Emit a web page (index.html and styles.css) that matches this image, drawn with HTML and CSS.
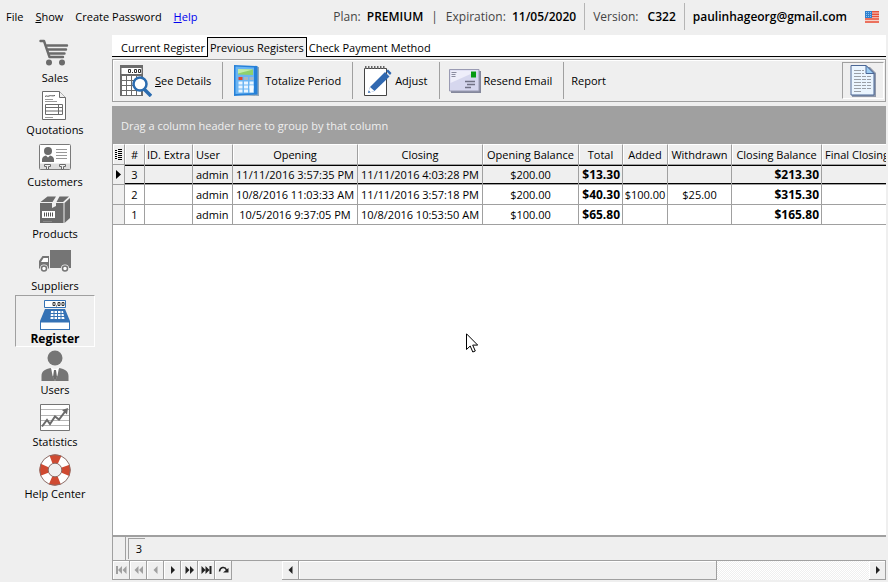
FILE: index.html
```html
<!DOCTYPE html>
<html lang="en">
<head>
  <meta charset="UTF-8" />
  <meta name="viewport" content="width=device-width, initial-scale=1.0"/>
  <title>Register</title>
  <link rel="stylesheet" href="styles.css">
</head>
<body>
  <header class="topbar">
    <nav class="menu">
      <button>File</button>
      <button><u>S</u>how</button>
      <button>Create Password</button>
      <a href="#help"><u>H</u>elp</a>
    </nav>
    <div class="account">
      <span>Plan: <b>PREMIUM</b></span>
      <span class="pipe">|</span>
      <span>Expiration: <b>11/05/2020</b></span>
      <span class="divided version">Version: <b>C322</b></span>
      <span class="divided email">paulinhageorg@gmail.com</span>
      <svg class="flag" viewBox="0 0 14 12" aria-label="English">
        <rect width="14" height="12" fill="#f6d5cc"/>
        <path d="M0 .8h14M0 3.2h14M0 5.6h14M0 8h14M0 10.9h14" stroke="#e8503a" stroke-width="1.5"/>
        <rect width="7" height="7" fill="#2f80cf"/>
        <path d="M1 1.5h5M1 3.5h5M1 5.5h5" stroke="#8fc4ee" stroke-dasharray="1 1"/>
      </svg>
    </div>
  </header>

  <div class="layout">
    <nav class="sidebar">
      <button class="side-item">
        <svg viewBox="0 0 32 32" fill="none" stroke="#6b6b6b" stroke-linecap="round" stroke-linejoin="round">
          <path d="M1.500 3h3.500l5.500 16H24" stroke-width="2.4"/>
          <path d="M8 7.500h20M9 11.500h18M10.500 15.500h15" stroke-width="2.4"/>
          <circle cx="10" cy="24.500" r="3" fill="#6b6b6b" stroke="none"/>
          <circle cx="23" cy="24.500" r="3" fill="#6b6b6b" stroke="none"/>
        </svg>
        <span>Sales</span>
      </button>
      <button class="side-item">
        <svg viewBox="0 0 32 32">
          <path d="M3.500 1.500h17l6 6v22h-23z" fill="#fff" stroke="#6b6b6b"/>
          <path d="M20.500 1.500v6h6" fill="#efefef" stroke="#6b6b6b"/>
          <path d="M6 6.500c2-1.500 2 .5 4-.5s3 .5 6-.5" fill="none" stroke="#555"/>
          <path d="M6 9.500h8M6 11.500h12M6 27.500h8" stroke="#999"/>
          <path d="M6.500 14.500h17v10h-17zM6.500 17.500h17M6.500 21h17M19.500 14.500v10" fill="none" stroke="#6b6b6b"/>
        </svg>
        <span>Quotations</span>
      </button>
      <button class="side-item">
        <svg viewBox="0 0 32 32">
          <rect x=".5" y="2.500" width="31" height="25" rx="1" fill="#fff" stroke="#7a7a7a"/>
          <path d="M1 21.500h30v5.500H1z" fill="#dedede"/>
          <circle cx="9" cy="9" r="4" fill="#6b6b6b"/>
          <path d="M3 20v-2.500c0-2.500 2-3.500 4-4l2 2 2-2c2 .5 4 1.500 4 4V20z" fill="#6b6b6b"/>
          <path d="M17 7.500h11M17 10.500h11M17 13.500h11M17 16.500h11" stroke="#999"/>
          <path d="M5.500 22.500h6v2h-2v3h-2v-3h-2zM20.500 22.500h6v2h-2v3h-2v-3h-2z" fill="#efefef" stroke="#6b6b6b"/>
        </svg>
        <span>Customers</span>
      </button>
      <button class="side-item">
        <svg viewBox="0 0 32 32" fill="#6b6b6b">
          <path d="M1 9h12v5l4-2V9h7.500v20H1z"/>
          <path d="M1.500 8l7-5.500H17L13.500 8zM19 2.500h11L24 8h-6.500l3-5.500z"/>
          <path d="M25.500 9l5.500-5v20l-5.500 5z"/>
          <path d="M3 17h13v7H3z" fill="#fff"/>
          <path d="M5.500 18.500v4M7.500 18.500v4M9.500 18.500v4M11.500 18.500v4M13.500 18.500v4" stroke="#555"/>
          <path d="M4 27.500h9" stroke="#888"/>
        </svg>
        <span>Products</span>
      </button>
      <button class="side-item">
        <svg viewBox="0 -2 32 32" fill="#757575">
          <path d="M11 2h21v18H11z"/>
          <path d="M0 20.500V13l3.500-5H10v12.500z"/>
          <path d="M2 14l2.500-4H9v4z" fill="#fff"/>
          <circle cx="5" cy="20.500" r="4" fill="#efefef"/><circle cx="26" cy="20.500" r="4" fill="#efefef"/>
          <circle cx="5" cy="20.500" r="2.500" fill="#fff" stroke="#757575" stroke-width="1.500"/>
          <circle cx="26" cy="20.500" r="2.500" fill="#fff" stroke="#757575" stroke-width="1.500"/>
        </svg>
        <span>Suppliers</span>
      </button>
      <button class="side-item active">
        <svg viewBox="0 0 32 32">
          <path d="M5.500 1.500h21v7h-21z" fill="#fff" stroke="#3572b5"/>
          <path d="M14 3.500h2v3h-2zM17.500 6.500v1M19 3.500h2v3h-2zM23 3.500h2v3h-2z" fill="none" stroke="#333"/>
          <path d="M6 10h20l5 12v9H1v-9z" fill="#3572b5"/>
          <path d="M2 23.500h28v6.500H2z" fill="#fff"/>
          <path d="M12 12h12l1.500 8h-14z" fill="#fff"/>
          <path d="M11 14.500h15M11 17.500h15M15 12v8M18.500 12v8M22 12v8" stroke="#3572b5"/>
        </svg>
        <span>Register</span>
      </button>
      <button class="side-item">
        <svg viewBox="0 0 32 32">
          <circle cx="16" cy="8" r="7.500" fill="#757575"/>
          <path d="M2.500 31v-5c0-5 4-7 9-8l4.500 3 4.500-3c5 1 9 3 9 8v5z" fill="#757575"/>
          <path d="M12 17.500l4 2 4-2-1.500 8L16 31l-2.500-5.500z" fill="#fff"/>
          <path d="M15 20h2l1 7-2 4-2-4z" fill="#6b6b6b"/>
        </svg>
        <span>Users</span>
      </button>
      <button class="side-item">
        <svg viewBox="0 0 32 32" fill="none">
          <path d="M1.500 2.500h29v26h-29z" fill="#fff" stroke="#757575"/>
          <path d="M2 7.500h28M2 13.500h28M2 18.500h28M2 23.500h28" stroke="#b5b5b5"/>
          <path d="M3 24.500l5-6.500 3 4 5-7.500 4 3L26.500 9" stroke="#6b6b6b" stroke-width="2"/>
          <path d="M23 8l6-2-1 6.500z" fill="#6b6b6b"/>
        </svg>
        <span>Statistics</span>
      </button>
      <button class="side-item">
        <svg viewBox="0 0 32 32" fill="none">
          <circle cx="16" cy="16" r="11" stroke="#fff" stroke-width="9"/>
          <circle cx="16" cy="16" r="11" stroke="#cf4a31" stroke-width="9" stroke-dasharray="8.640 8.640" stroke-dashoffset="4.320"/>
          <circle cx="16" cy="16" r="15.300" stroke="#8a6a64"/>
          <circle cx="16" cy="16" r="6.800" fill="#efefef" stroke="#8a6a64"/>
        </svg>
        <span>Help Center</span>
      </button>
    </nav>

    <main class="content">
      <div class="tabs" role="tablist">
        <button class="tab" role="tab">Current Register</button>
        <button class="tab selected" role="tab" aria-selected="true">Previous Registers</button>
        <button class="tab" role="tab">Check Payment Method</button>
      </div>

      <div class="toolbar">
        <button class="tool">
          <svg viewBox="0 0 32 32">
            <path d="M0 0h23v31H0z" fill="#6b6b6b"/>
            <path d="M1.500 3h20v6h-20z" fill="#fff"/>
            <path d="M8.500 4.500h2v3h-2zM12.500 7v1M14.500 4.500h2v3h-2zM18.500 4.500h2v3h-2z" fill="none" stroke="#333"/>
            <path d="M2 13h19M2 18h19M2 23h19M2 28h19" stroke="#fff" stroke-width="4" stroke-dasharray="4 1"/>
            <path d="M24 24l7 7" stroke="#2b6cb0" stroke-width="3.500"/>
            <circle cx="20" cy="19" r="6.500" fill="#fff" stroke="#2b6cb0" stroke-width="2.500"/>
          </svg>
          <span><u>S</u>ee Details</span>
        </button>
        <button class="tool">
          <svg viewBox="0 0 32 32">
            <path d="M5 1l24 1v29L5 30z" fill="#8fa5b8"/>
            <path d="M4 0l23.500 1v28.500L4 31z" fill="#2580d8"/>
            <path d="M5.500 1.500L24 2.500v25.500L5.500 29z" fill="#6bb5f3"/>
            <path d="M8 4l15 .5v5.500L8 9.500z" fill="#8fd16c"/>
            <path d="M8 4l15 .5-15 4z" fill="#c0ecab"/>
            <path d="M8.500 12h4v3h-4z" fill="#e2442e"/>
            <path d="M14 13.500h4M19.500 13.500h4" stroke="#a9b7c3" stroke-width="3"/>
            <path d="M8.500 18h15M8.500 22h15M8.500 26h9.500" stroke="#e9f5ff" stroke-width="3" stroke-dasharray="4 1.500"/>
            <path d="M19.500 20.500h4v7h-4z" fill="#f4faff"/>
          </svg>
          <span>Totalize Period</span>
        </button>
        <button class="tool">
          <svg viewBox="0 0 32 32">
            <path d="M4.500 3.500h22v27h-22z" fill="#fff" stroke="#444"/>
            <path d="M5 2.500h21" stroke="#666" stroke-width="3" stroke-dasharray="1.500 1.500"/>
            <path d="M8 28l2-6L25 7l4.500 4.500-15 14.500z" fill="#3068b0"/>
            <path d="M8 28l2-6 4.500 4z" fill="#fff"/>
            <path d="M8 28l.8-2.500 1.700 1.700z" fill="#3068b0"/>
            <path d="M26 6l2-1.500 3.500 3.500L30 10z" fill="#3068b0"/>
          </svg>
          <span>Adjust</span>
        </button>
        <button class="tool wide">
          <svg viewBox="0 0 32 32">
            <path d="M2 6h30v22H2z" fill="#85889c"/>
            <path d="M.5 4.500h29.500v21.500H.5z" fill="#d6d7ee" stroke="#9a9bb3"/>
            <path d="M1.500 5.500h28L1.500 18z" fill="#eeeefa"/>
            <path d="M22 6.500h5v6h-5z" fill="#069a10"/>
            <path d="M2.500 7.500h5M2.500 9.500h4M2.500 11.500h4" stroke="#8b8ca0"/>
            <path d="M16 16.500h10M18 19.500h8M16 22.500h6" stroke="#707184" stroke-width="1.500"/>
          </svg>
          <span>Resend Email</span>
        </button>
        <button class="tool">Report</button>
        <button class="tool-page" aria-label="Page">
          <svg viewBox="0 0 32 32">
            <path d="M5 2h18l6 6v24H5z" fill="#8f98aa"/>
            <path d="M4 .5h15l8 8v21.500H4z" fill="#eaf5ff" stroke="#4b6796"/>
            <path d="M19 .5v8h8z" fill="#9cccf2" stroke="#4b6796"/>
            <path d="M7 5.500h10M7 8.500h10M7 11.500h17M7 14.500h17M7 17.500h17M7 20.500h17M7 23.500h17M7 26.500h8" stroke="#9a9fa6" stroke-dasharray="7 1 4 1"/>
          </svg>
        </button>
      </div>

      <section class="grid">
        <div class="group-bar">Drag a column header here to group by that column</div>
        <div class="grid-body">
          <table class="registers">
            <colgroup>
              <col class="c-mark"><col class="c-num"><col class="c-extra"><col class="c-user">
              <col class="c-date"><col class="c-date"><col class="c-balance"><col class="c-total">
              <col class="c-added"><col class="c-withdrawn"><col class="c-closing"><col>
            </colgroup>
            <thead>
              <tr>
                <th aria-label="Columns">
                  <svg class="list" viewBox="0 0 8 11"><path d="M0 1.500h2M0 3.500h2M0 5.500h2M0 7.500h2M0 9.500h2M3 .5h4M3 2.500h4M3 4.500h4M3 6.500h4M3 8.500h4M3 10.500h4" stroke="#000"/></svg>
                </th>
                <th>#</th>
                <th>ID. Extra</th>
                <th class="left">User</th>
                <th>Opening</th>
                <th>Closing</th>
                <th>Opening Balance</th>
                <th>Total</th>
                <th>Added</th>
                <th>Withdrawn</th>
                <th>Closing Balance</th>
                <th class="left">Final Closing</th>
              </tr>
            </thead>
            <tbody>
              <tr class="current">
                <td class="mark"><svg class="arrow" viewBox="0 0 5 9"><path d="M0 0l5 4.500L0 9z"/></svg></td>
                <td>3</td><td></td><td class="left">admin</td>
                <td>11/11/2016 3:57:35 PM</td><td>11/11/2016 4:03:28 PM</td>
                <td>$200.00</td><td class="sum">$13.30</td><td></td><td></td><td class="sum">$213.30</td><td></td>
              </tr>
              <tr>
                <td class="mark"></td>
                <td>2</td><td></td><td class="left">admin</td>
                <td>10/8/2016 11:03:33 AM</td><td>11/11/2016 3:57:18 PM</td>
                <td>$200.00</td><td class="sum">$40.30</td><td>$100.00</td><td>$25.00</td><td class="sum">$315.30</td><td></td>
              </tr>
              <tr>
                <td class="mark"></td>
                <td>1</td><td></td><td class="left">admin</td>
                <td>10/5/2016 9:37:05 PM</td><td>10/8/2016 10:53:50 AM</td>
                <td>$100.00</td><td class="sum">$65.80</td><td></td><td></td><td class="sum">$165.80</td><td></td>
              </tr>
            </tbody>
          </table>
          <svg class="cursor" viewBox="0 0 12 20"><path d="M.5.8v15.700l3.700-3.500 2.600 6 2.500-1-2.600-5.900h5z" fill="#fff" stroke="#000"/></svg>
        </div>
        <div class="grid-footer"><span class="count">3</span></div>
        <div class="grid-nav">
          <button aria-label="First" disabled><svg viewBox="0 0 11 8"><path d="M0 0h2v8H0zM6 0v8L2 4zM10.500 0v8l-4-4z"/></svg></button>
          <button aria-label="Previous page" disabled><svg viewBox="0 0 11 8"><path d="M5.500 0v8l-4-4zM10 0v8L6 4z"/></svg></button>
          <button aria-label="Previous" disabled><svg viewBox="0 0 11 8"><path d="M7.500 0v8l-4-4z"/></svg></button>
          <button aria-label="Next"><svg viewBox="0 0 11 8"><path d="M4 0v8l4-4z"/></svg></button>
          <button aria-label="Next page"><svg viewBox="0 0 11 8"><path d="M1.500 0v8l4-4zM6 0v8l4-4z"/></svg></button>
          <button aria-label="Last"><svg viewBox="0 0 11 8"><path d="M.5 0v8l4-4zM4.500 0v8l4-4zM8.500 0h2v8h-2z"/></svg></button>
          <button aria-label="Refresh"><svg viewBox="0 0 11 8"><path d="M1.500 5.500C2 1 7 0 8.500 4" fill="none" stroke="#222" stroke-width="1.500"/><path d="M5 6.500h5.500V2z"/></svg></button>
          <div class="scrollbar">
            <button class="scroll-btn" aria-label="Scroll left"><svg viewBox="0 0 11 8"><path d="M7.500 0v8l-4-4z"/></svg></button>
            <div class="thumb"></div>
            <div class="track"></div>
            <button class="scroll-btn" aria-label="Scroll right"><svg viewBox="0 0 11 8"><path d="M4 0v8l4-4z"/></svg></button>
          </div>
        </div>
      </section>
    </main>
  </div>
</body>
</html>
```
FILE: styles.css
```css
* {
  box-sizing: border-box;
}

body {
  margin: 0;
  height: 100vh;
  display: flex;
  flex-direction: column;
  background: #efefef;
  color: #000;
  font-family: "Open Sans", "Noto Sans", sans-serif;
  font-size: 11px;
  line-height: 16px;
  overflow: hidden;
}

button {
  font: inherit;
  color: inherit;
  background: none;
  border: none;
  padding: 0;
  white-space: nowrap;
}

svg {
  display: block;
  flex: none;
}

/* Top bar */
.topbar {
  height: 35px;
  flex: none;
  display: flex;
  align-items: center;
  justify-content: space-between;
  padding: 0 9px 2px 6px;
}

.menu {
  display: flex;
  gap: 12px;
}

.menu a {
  color: #0000f0;
  text-decoration: none;
}

.account {
  display: flex;
  align-items: center;
  font-size: 12px;
  color: #444;
  white-space: nowrap;
}

.account b {
  font-weight: 600;
  color: #000;
  margin-left: 3px;
}

.pipe {
  margin: 0 8px;
}

.divided {
  border-left: 1px solid #b5b5b5;
  padding-left: 8px;
  margin-left: 8px;
  line-height: 27px;
}

.account .version b {
  margin-left: 6px;
}

.email {
  font-weight: 600;
  color: #000;
}

.flag {
  width: 14px;
  height: 12px;
  margin-left: 18px;
}

.layout {
  flex: 1;
  min-height: 0;
  display: flex;
}

/* Sidebar */
.sidebar {
  width: 112px;
  flex: none;
  display: flex;
  flex-direction: column;
  align-items: center;
  padding-right: 2px;
}

.side-item {
  width: 80px;
  height: 52px;
  display: flex;
  flex-direction: column;
  align-items: center;
  justify-content: center;
  border: 1px solid transparent;
  padding-top: 2px;
}

.side-item svg {
  width: 32px;
  height: 32px;
}

.side-item.active {
  border-color: #a0a0a0 #fff #fff #a0a0a0;
  font-size: 12px;
  font-weight: bold;
  padding-top: 4px;
}

/* Content */
.content {
  flex: 1;
  min-width: 0;
  display: flex;
  flex-direction: column;
  padding: 0 2px 2px 0;
}

.tabs {
  height: 22px;
  flex: none;
  display: flex;
  padding: 2px 0 0 7px;
  background: #fff;
  border-bottom: 1px solid #000;
}

.tab {
  padding: 2px 2px 0;
  height: 20px;
}

.tab.selected {
  background: #efefef;
  border: 1px solid #000;
  border-bottom: none;
  padding-top: 1px;
}

.toolbar {
  flex: none;
  height: 43px;
  margin: 2px 0 4px;
  display: flex;
  border: 1px solid #a0a0a0;
  box-shadow: inset 1px 1px #fff;
  padding: 2px 0;
}

.tool {
  display: flex;
  align-items: center;
  gap: 3px;
  padding: 0 11px 0 7px;
  border-right: 1px solid #a0a0a0;
}

.tool.wide {
  padding-left: 9px;
}

.tool svg,
.tool-page svg {
  width: 32px;
  height: 32px;
}

.tool:nth-child(5) {
  border-right: none;
}

.tool-page {
  width: 42px;
  margin-left: auto;
  margin-right: 1px;
  display: flex;
  align-items: center;
  justify-content: center;
  border: 1px solid;
  border-color: #a0a0a0 #fff #fff #a0a0a0;
}

/* Grid */
.grid {
  flex: 1;
  min-height: 0;
  display: flex;
  flex-direction: column;
  border-left: 1px solid #a0a0a0;
}

.group-bar {
  flex: none;
  background: #a0a0a0;
  color: #efefef;
  padding: 12px 8px 10px;
}

.grid-body {
  flex: 1;
  min-height: 0;
  position: relative;
  overflow: hidden;
  background: #fff;
}

.registers {
  width: 100%;
  table-layout: fixed;
  border-collapse: separate;
  border-spacing: 0;
  text-align: center;
}

.c-mark { width: 12px; }
.c-num { width: 20px; }
.c-extra { width: 48px; }
.c-user { width: 40px; }
.c-date { width: 125px; }
.c-balance { width: 96px; }
.c-total { width: 44px; }
.c-added { width: 45px; }
.c-withdrawn { width: 64px; }
.c-closing { width: 90px; }

.registers th,
.registers td {
  height: 20px;
  padding: 0;
  border-right: 1px solid #a0a0a0;
  border-bottom: 1px solid #a0a0a0;
  white-space: nowrap;
  overflow: hidden;
}

.registers th {
  height: 21px;
  background: #efefef;
  font-weight: normal;
  border-top: 1px solid #fff;
  box-shadow: inset 1px 0 #fff;
}

.registers th:last-child,
.registers td:last-child {
  border-right: none;
}

.registers .left {
  text-align: left;
  padding-left: 3px;
}

.registers .mark {
  background: #efefef;
}

.registers .sum {
  text-align: right;
  padding-right: 2px;
  font-size: 12px;
  font-weight: bold;
}

.registers .current td {
  background: #efefef;
}

.registers .current td:not(.mark) {
  box-shadow: inset 0 1px #000, inset 0 -1px #000;
}

.list {
  width: 8px;
  height: 11px;
  margin: 0 auto;
}

.arrow {
  width: 5px;
  height: 9px;
  margin: 0 auto;
}

.cursor {
  position: absolute;
  left: 353px;
  top: 189px;
  width: 12px;
  height: 20px;
}

.grid-footer {
  flex: none;
  height: 26px;
  display: flex;
  border-top: 2px solid #a0a0a0;
  border-bottom: 1px solid #a0a0a0;
}

.grid-footer::before {
  content: "";
  width: 12px;
  border-right: 1px solid #a0a0a0;
}

.count {
  width: 17px;
  margin: 1px 2px;
  padding-right: 3px;
  text-align: right;
  line-height: 20px;
  border-top: 1px solid #a0a0a0;
  border-left: 1px solid #a0a0a0;
}

.grid-nav {
  flex: none;
  height: 19px;
  display: flex;
}

.grid-nav button {
  width: 17px;
  display: flex;
  align-items: center;
  justify-content: center;
  border-right: 1px solid #a0a0a0;
  border-bottom: 1px solid #a0a0a0;
  box-shadow: inset 1px 1px #fff;
}

.grid-nav svg {
  width: 11px;
  height: 8px;
  fill: #222;
}

.grid-nav button:disabled svg {
  fill: #a0a0a0;
}

.scrollbar {
  flex: 1;
  display: flex;
  margin-left: 50px;
}

.thumb {
  flex: 11;
  border-right: 1px solid #a0a0a0;
  border-bottom: 1px solid #a0a0a0;
  box-shadow: inset 1px 1px #fff;
}

.track {
  flex: 4;
  background: repeating-conic-gradient(#efefef 0 25%, #fff 0 50%) 0 0 / 2px 2px;
}
```
